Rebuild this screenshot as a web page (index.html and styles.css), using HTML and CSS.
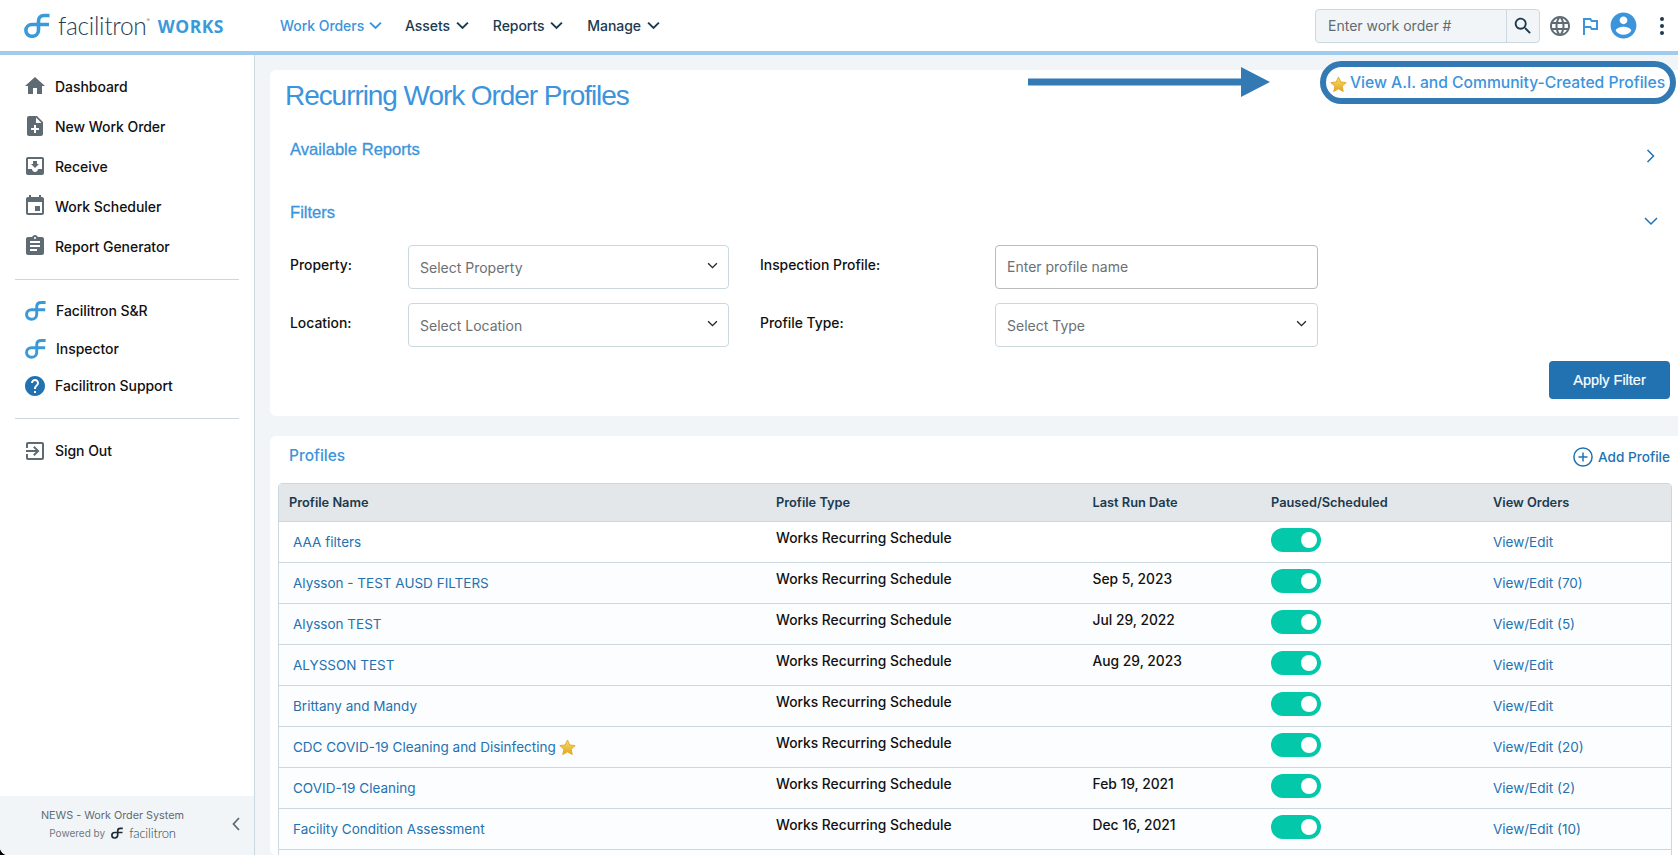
FILE: index.html
```html
<!DOCTYPE html>
<html lang="en">
<head>
<meta charset="utf-8">
<title>Recurring Work Order Profiles</title>
<link rel="stylesheet" href="styles.css">
</head>
<body>
<svg class="defs" width="0" height="0" aria-hidden="true">
  <defs>
    <symbol id="logo" viewBox="0 0 26 25"><path d="M25.5 2.5H20C16.2 2.500 14.500 5 14.500 8V17C14.500 21 11.500 23.300 8 23.300C4.500 23.300 1.900 20.800 1.900 17.500C1.900 14 4.500 11.500 8 11.500H25" fill="none" stroke="currentColor" stroke-width="3.600"/></symbol>
    <linearGradient id="gold" x1="0" y1="0" x2="0" y2="1"><stop offset="0" stop-color="#fbe06a"/><stop offset="1" stop-color="#e2a420"/></linearGradient>
    <symbol id="star" viewBox="0 0 24 24"><path d="M12 1.500l3.200 7 7.600.8-5.700 5.100 1.600 7.500L12 18.100l-6.700 3.800 1.600-7.500L1.200 9.300l7.600-.8z" fill="url(#gold)" stroke="#e3aa2a" stroke-width="1.400" stroke-linejoin="round"/></symbol>
    <symbol id="down" viewBox="0 0 12 8"><path d="M1 1.500l5 5 5-5" fill="none" stroke="currentColor" stroke-width="1.500"/></symbol>
    <symbol id="navdown" viewBox="0 0 12 8"><path d="M1 1.300l5 5 5-5" fill="none" stroke="currentColor" stroke-width="1.800"/></symbol>
  </defs>
</svg>
<div class="app">
  <header class="topbar">
    <a class="brand">
      <svg class="brand-mark"><use href="#logo"/></svg>
      <span class="brand-name">facilitron</span><span class="brand-reg">®</span>
      <span class="brand-works">WORKS</span>
    </a>
    <nav class="mainnav">
      <a class="navitem active">Work Orders <svg class="navchev"><use href="#navdown"/></svg></a>
      <a class="navitem">Assets <svg class="navchev"><use href="#navdown"/></svg></a>
      <a class="navitem">Reports <svg class="navchev"><use href="#navdown"/></svg></a>
      <a class="navitem">Manage <svg class="navchev"><use href="#navdown"/></svg></a>
    </nav>
    <div class="tools">
      <div class="wosearch">
        <input class="wosearch-input" placeholder="Enter work order #">
        <span class="wosearch-btn"><svg class="i22" viewBox="0 0 24 24"><path d="M15.500 14h-.79l-.28-.27C15.410 12.590 16 11.110 16 9.500 16 5.910 13.090 3 9.500 3S3 5.910 3 9.500 5.910 16 9.500 16c1.610 0 3.090-.59 4.230-1.570l.27.28v.79l5 4.990L20.490 19l-4.990-5zm-6 0C7.010 14 5 11.990 5 9.500S7.010 5 9.500 5 14 7.010 14 9.500 11.990 14 9.500 14z"/></svg></span>
      </div>
      <svg class="globe" viewBox="0 0 24 24"><path d="M11.990 2C6.470 2 2 6.480 2 12s4.470 10 9.990 10C17.520 22 22 17.520 22 12S17.520 2 11.990 2zm6.930 6h-2.950c-.32-1.250-.78-2.450-1.380-3.560 1.840.63 3.370 1.910 4.330 3.560zM12 4.040c.83 1.200 1.480 2.530 1.910 3.960h-3.820c.43-1.430 1.080-2.760 1.910-3.960zM4.260 14C4.100 13.360 4 12.690 4 12s.1-1.360.26-2h3.380c-.08.66-.14 1.320-.14 2 0 .68.06 1.340.14 2H4.260zm.82 2h2.950c.32 1.250.78 2.450 1.380 3.560-1.840-.63-3.370-1.900-4.330-3.560zm2.950-8H5.080c.96-1.660 2.490-2.930 4.330-3.560C8.810 5.550 8.350 6.750 8.030 8zM12 19.960c-.83-1.200-1.480-2.530-1.910-3.960h3.820c-.43 1.430-1.080 2.760-1.910 3.960zM14.340 14H9.660c-.09-.66-.16-1.320-.16-2 0-.68.07-1.350.16-2h4.680c.09.65.16 1.320.16 2 0 .68-.07 1.340-.16 2zm.25 5.560c.6-1.110 1.060-2.310 1.380-3.560h2.950c-.96 1.650-2.490 2.930-4.330 3.560zM16.360 14c.08-.66.14-1.320.14-2 0-.68-.06-1.340-.14-2h3.380c.16.64.26 1.310.26 2s-.1 1.360-.26 2h-3.380z"/></svg>
      <svg class="flag" viewBox="0 0 24 24"><path d="M14 6l-1-2H5v17h2v-7h5l1 2h7V6h-6zm4 8h-4l-1-2H7V6h5l1 2h5v6z"/></svg>
      <svg class="avatar" viewBox="0 0 24 24"><path d="M12 2C6.480 2 2 6.480 2 12s4.480 10 10 10 10-4.480 10-10S17.520 2 12 2zm0 3c1.660 0 3 1.340 3 3s-1.340 3-3 3-3-1.340-3-3 1.340-3 3-3zm0 14.200c-2.500 0-4.710-1.280-6-3.220.03-1.990 4-3.080 6-3.080 1.990 0 5.970 1.090 6 3.080-1.290 1.940-3.500 3.220-6 3.220z"/></svg>
      <span class="kebab"><i></i><i></i><i></i></span>
    </div>
  </header>

  <div class="body">
    <aside class="sidebar">
      <nav class="sidenav">
        <a class="sideitem"><svg class="sideicon" viewBox="0 0 24 24"><path d="M10 20v-6h4v6h5v-8h3L12 3 2 12h3v8z"/></svg>Dashboard</a>
        <a class="sideitem"><svg class="sideicon" viewBox="0 0 24 24"><path d="M14 2H6c-1.100 0-1.990.9-1.990 2L4 20c0 1.100.89 2 1.990 2H18c1.100 0 2-.9 2-2V8l-6-6zm2 14h-3v3h-2v-3H8v-2h3v-3h2v3h3v2zm-3-7V3.500L18.500 9H13z"/></svg>New Work Order</a>
        <a class="sideitem"><svg class="sideicon" viewBox="0 0 24 24"><path d="M19 3H4.990c-1.110 0-1.980.89-1.980 2L3 19c0 1.100.88 2 1.990 2H19c1.100 0 2-.9 2-2V5c0-1.110-.9-2-2-2zm0 12h-4c0 1.660-1.350 3-3 3s-3-1.340-3-3H4.990V5H19v10zm-3-5h-2V7h-4v3H8l4 4 4-4z"/></svg>Receive</a>
        <a class="sideitem"><svg class="sideicon" viewBox="0 0 24 24"><path d="M17 12h-5v5h5v-5zM16 1v2H8V1H6v2H5c-1.110 0-1.990.9-1.990 2L3 19c0 1.100.89 2 2 2h14c1.100 0 2-.9 2-2V5c0-1.100-.9-2-2-2h-1V1h-2zm3 18H5V8h14v11z"/></svg>Work Scheduler</a>
        <a class="sideitem"><svg class="sideicon" viewBox="0 0 24 24"><path d="M19 3h-4.180C14.400 1.840 13.300 1 12 1c-1.300 0-2.400.84-2.820 2H5c-1.100 0-2 .9-2 2v14c0 1.100.9 2 2 2h14c1.100 0 2-.9 2-2V5c0-1.100-.9-2-2-2zm-7 0c.55 0 1 .45 1 1s-.45 1-1 1-1-.45-1-1 .45-1 1-1zm2 14H7v-2h7v2zm3-4H7v-2h10v2zm0-4H7V7h10v2z"/></svg>Report Generator</a>
      </nav>
      <hr class="sidediv first">
      <nav class="sidenav apps">
        <a class="sideitem"><svg class="sidelogo"><use href="#logo"/></svg>Facilitron S&amp;R</a>
        <a class="sideitem"><svg class="sidelogo"><use href="#logo"/></svg>Inspector</a>
        <a class="sideitem support"><svg class="sideicon help" viewBox="0 0 24 24"><path d="M12 2C6.480 2 2 6.480 2 12s4.480 10 10 10 10-4.480 10-10S17.520 2 12 2zm1 17h-2v-2h2v2zm2.070-7.750l-.9.92C13.450 12.900 13 13.500 13 15h-2v-.5c0-1.100.45-2.100 1.170-2.830l1.240-1.260c.37-.36.59-.86.59-1.410 0-1.100-.9-2-2-2s-2 .9-2 2H8c0-2.210 1.790-4 4-4s4 1.790 4 4c0 .88-.36 1.680-.93 2.250z"/></svg>Facilitron Support</a>
      </nav>
      <hr class="sidediv">
      <nav class="sidenav">
        <a class="sideitem"><svg class="sideicon" viewBox="0 0 24 24"><path d="M10.090 15.590L11.500 17l5-5-5-5-1.410 1.410L12.670 11H3v2h9.670l-2.580 2.590zM19 3H5c-1.110 0-2 .9-2 2v4h2V5h14v14H5v-4H3v4c0 1.100.89 2 2 2h14c1.100 0 2-.9 2-2V5c0-1.100-.9-2-2-2z"/></svg>Sign Out</a>
      </nav>
      <footer class="sidefoot">
        <div class="sidefoot-info">
          <div class="sidefoot-name">NEWS - Work Order System</div>
          <div class="sidefoot-power">Powered by <svg class="foot-mark"><use href="#logo"/></svg><span class="foot-brand">facilitron</span></div>
        </div>
        <svg class="collapse" viewBox="0 0 8 14"><path d="M7 1L1.500 7 7 13" fill="none" stroke="currentColor" stroke-width="1.800"/></svg>
      </footer>
    </aside>

    <main class="content">
      <section class="card card-filters">
        <h1 class="pagetitle">Recurring Work Order Profiles</h1>
        <div class="callout">
          <svg class="callout-arrow" viewBox="0 0 242 30"><path d="M0 11.500H213V0L242 15 213 30V18.500H0z"/></svg>
          <a class="callout-link"><svg class="star"><use href="#star"/></svg>View A.I. and Community-Created Profiles</a>
        </div>
        <div class="sechead first">
          <h2 class="sectitle">Available Reports</h2>
          <svg class="secchev right" viewBox="0 0 20 20"><path d="M6.500 4l6 6-6 6" fill="none" stroke="currentColor" stroke-width="1.500"/></svg>
        </div>
        <div class="sechead">
          <h2 class="sectitle">Filters</h2>
          <svg class="secchev lower" viewBox="0 0 20 20"><path d="M4 7l6 6 6-6" fill="none" stroke="currentColor" stroke-width="1.500"/></svg>
        </div>
        <form class="filters">
          <label class="flabel">Property:</label>
          <div class="fselect"><span>Select Property</span><svg class="fchev"><use href="#down"/></svg></div>
          <label class="flabel">Inspection Profile:</label>
          <input class="finput" placeholder="Enter profile name">
          <label class="flabel">Location:</label>
          <div class="fselect"><span>Select Location</span><svg class="fchev"><use href="#down"/></svg></div>
          <label class="flabel">Profile Type:</label>
          <div class="fselect"><span>Select Type</span><svg class="fchev"><use href="#down"/></svg></div>
        </form>
        <div class="actions"><button class="btn" type="button">Apply Filter</button></div>
      </section>

      <section class="card card-table">
        <div class="tablehead">
          <h2 class="tabletitle">Profiles</h2>
          <a class="addlink"><svg class="addicon" viewBox="0 0 20 20"><circle cx="10" cy="10" r="9.100" fill="none" stroke="currentColor" stroke-width="1.500"/><path d="M10 5.500v9M5.500 10h9" stroke="currentColor" stroke-width="1.500"/></svg>Add Profile</a>
        </div>
        <table class="grid">
          <colgroup><col class="c1"><col class="c2"><col class="c3"><col class="c4"><col class="c5"></colgroup>
          <thead><tr><th>Profile Name</th><th>Profile Type</th><th>Last Run Date</th><th>Paused/Scheduled</th><th>View Orders</th></tr></thead>
          <tbody>
            <tr><td class="name"><a>AAA filters</a></td><td class="up">Works Recurring Schedule</td><td class="up"></td><td class="tg"><span class="toggle"><i></i></span></td><td class="view"><a>View/Edit</a></td></tr>
            <tr><td class="name"><a>Alysson - TEST AUSD FILTERS</a></td><td class="up">Works Recurring Schedule</td><td class="up">Sep 5, 2023</td><td class="tg"><span class="toggle"><i></i></span></td><td class="view"><a>View/Edit (70)</a></td></tr>
            <tr><td class="name"><a>Alysson TEST</a></td><td class="up">Works Recurring Schedule</td><td class="up">Jul 29, 2022</td><td class="tg"><span class="toggle"><i></i></span></td><td class="view"><a>View/Edit (5)</a></td></tr>
            <tr><td class="name"><a>ALYSSON TEST</a></td><td class="up">Works Recurring Schedule</td><td class="up">Aug 29, 2023</td><td class="tg"><span class="toggle"><i></i></span></td><td class="view"><a>View/Edit</a></td></tr>
            <tr><td class="name"><a>Brittany and Mandy</a></td><td class="up">Works Recurring Schedule</td><td class="up"></td><td class="tg"><span class="toggle"><i></i></span></td><td class="view"><a>View/Edit</a></td></tr>
            <tr><td class="name"><a>CDC COVID-19 Cleaning and Disinfecting</a> <svg class="star rowstar"><use href="#star"/></svg></td><td class="up">Works Recurring Schedule</td><td class="up"></td><td class="tg"><span class="toggle"><i></i></span></td><td class="view"><a>View/Edit (20)</a></td></tr>
            <tr><td class="name"><a>COVID-19 Cleaning</a></td><td class="up">Works Recurring Schedule</td><td class="up">Feb 19, 2021</td><td class="tg"><span class="toggle"><i></i></span></td><td class="view"><a>View/Edit (2)</a></td></tr>
            <tr><td class="name"><a>Facility Condition Assessment</a></td><td class="up">Works Recurring Schedule</td><td class="up">Dec 16, 2021</td><td class="tg"><span class="toggle"><i></i></span></td><td class="view"><a>View/Edit (10)</a></td></tr>
            <tr><td></td><td></td><td></td><td></td><td></td></tr>
          </tbody>
        </table>
      </section>
    </main>
  </div>
</div>
</body>
</html>
```
FILE: styles.css
```css
* { box-sizing: border-box; }
html, body { margin: 0; height: 100%; overflow: hidden; background: #000; }
body { font-family: Inter, "Liberation Sans", sans-serif; font-size: 14px; color: #111; }
.defs { position: absolute; }
.app { height: 855px; display: flex; flex-direction: column; background: #f2f5f7; border-bottom-left-radius: 8px; overflow: hidden; }

/* top bar */
.topbar { height: 55px; flex: none; display: flex; align-items: center; background: #fff; border-bottom: 4px solid #9ecbee; padding-left: 24px; }
.brand { display: flex; align-items: center; width: 256px; color: #1f3d52; }
.brand-mark { width: 26px; height: 25px; color: #3a9ad9; margin: -1px 8px 0 0; }
.brand-name { font-family: Lato, sans-serif; font-weight: 300; font-size: 24.500px; letter-spacing: -.3px; color: #1f3d52; }
.brand-reg { font-size: 5px; align-self: flex-start; margin: 6px 0 0 0; color: #777; }
.brand-works { font-family: "Open Sans", sans-serif; font-weight: 700; font-size: 17.500px; letter-spacing: .5px; color: #3a9ad9; margin-left: 8px; }
.mainnav { display: flex; gap: 24.300px; }
.navitem { display: flex; align-items: center; gap: 5.500px; font-weight: 500; font-size: 14px; letter-spacing: -.05px; color: #1c3a4f; }
.navitem.active { color: #3b94dc; margin-right: -1.500px; gap: 5px; }
.navchev { width: 13px; height: 9px; }
.tools { margin-left: auto; display: flex; align-items: center; }
.wosearch { display: flex; width: 225px; height: 34px; background: #f2f5f7; border: 1px solid #ccd8e0; border-radius: 4px; margin-right: 8px; }
.wosearch-input { flex: 1; min-width: 0; border: 0; background: none; padding: 0 12px; font: 400 14px Inter, sans-serif; color: #333; outline: 0; }
.wosearch-input::placeholder { color: #5f6b73; opacity: 1; }
.wosearch-btn { width: 33px; display: flex; align-items: center; justify-content: center; border-left: 1px solid #ccd8e0; }
.i22 { width: 22px; height: 22px; fill: #1c3a4f; }
.globe { width: 24px; height: 24px; fill: #5f6b73; }
.flag { width: 24px; height: 24px; fill: #3b94dc; margin-left: 6px; }
.avatar { width: 31px; height: 31px; fill: #3b94dc; margin-left: 6px; }
.kebab { display: flex; flex-direction: column; align-items: center; gap: 3px; width: 10px; margin: 0 11px 0 18px; }
.kebab i { width: 4px; height: 4px; border-radius: 50%; background: #1c3a4f; }

/* sidebar */
.body { flex: 1; min-height: 0; display: flex; }
.sidebar { width: 255px; flex: none; display: flex; flex-direction: column; background: #fff; border-right: 1px solid #ccd8e0; padding-top: 11px; }
.sidenav { display: flex; flex-direction: column; }
.sideitem { height: 40px; display: flex; align-items: center; padding-left: 23px; gap: 8px; font-weight: 500; font-size: 14px; letter-spacing: -.05px; color: #111; }
.apps { padding-bottom: 1px; }
.apps .sideitem { height: 37.500px; }
.sideicon { width: 24px; height: 24px; fill: #5f6b73; flex: none; }
.sideicon.help { fill: #2272b1; }
.sidelogo { width: 21px; height: 21px; margin-left: 2px; margin-right: 2px; color: #3a9ad9; flex: none; }
.sidediv { margin: 12px 15px; border: 0; border-top: 1px solid #ccd8e0; }
.sidediv.first { margin-top: 13px; }
.sidefoot { margin-top: auto; height: 59px; display: flex; align-items: center; padding-bottom: 3px; background: #f2f5f7; }
.sidefoot-info { width: 225px; text-align: center; color: #5f6b73; }
.sidefoot-name { font-size: 10.800px; line-height: 17px; padding-top: 1px; }
.sidefoot-power { display: flex; align-items: center; justify-content: center; font-size: 10px; color: #70797f; line-height: 18px; }
.foot-mark { width: 12px; height: 12px; color: #1c2a33; margin: 0 6px; }
.foot-brand { font-family: Lato, sans-serif; font-weight: 300; font-size: 13px; letter-spacing: -.2px; color: #1f3d52; }
.collapse { width: 8px; height: 14px; color: #5f6b73; margin-left: 7px; }

/* main */
.content { flex: 1; min-width: 0; padding: 15px 0 0 15px; display: flex; flex-direction: column; gap: 20px; }
.card { background: #fff; border-radius: 6px 0 0 6px; }
.card-filters { position: relative; flex: none; height: 346px; padding-left: 16px; }
.pagetitle { margin: 0 0 0 -1px; height: 50px; line-height: 51px; font-family: "Liberation Sans", Arial, sans-serif; font-weight: 400; font-size: 28px; letter-spacing: -1.060px; color: #3b94dc; }
.callout { position: absolute; top: -9px; right: 2px; display: flex; align-items: center; }
.callout-arrow { position: absolute; right: 406px; top: 6px; width: 242px; height: 30px; fill: #337ab5; }
.callout-link { display: flex; align-items: center; width: 356px; height: 43px; padding-left: 4px; border: 6px solid #337ab5; border-radius: 22px; background: #fff; font-weight: 500; font-size: 15.650px; color: #3b94dc; white-space: nowrap; }
.star { width: 17px; height: 17px; flex: none; }
.callout-link .star { margin: 4px 3px 0 0; }
.sechead { display: flex; justify-content: space-between; height: 20px; padding: 0 17px 0 4px; margin-top: 43px; }
.sechead.first { margin-top: 19px; }
.sectitle { margin: 0; font-family: "Liberation Sans", Arial, sans-serif; font-weight: 400; font-size: 16.600px; line-height: 22px; -webkit-text-stroke: .3px #3b94dc; color: #3b94dc; }
.secchev { width: 20px; height: 20px; margin-top: 7px; color: #2272b1; flex: none; }
.secchev.lower { margin-top: 9px; }
.filters { margin: 23px 0 0 4px; display: grid; grid-template-columns: 118px 321px 266px 322.500px; grid-auto-rows: 44px; row-gap: 14px; }
.flabel { padding-top: 10px; line-height: 20px; font-weight: 500; font-size: 13.900px; color: #111; }
.filters .fselect + .flabel { padding-left: 31px; }
.fselect { display: flex; align-items: center; justify-content: space-between; padding: 1px 10px 0 11px; background: #fff; border: 1px solid #ccd8e0; border-radius: 4px; font-size: 14px; color: #6b7075; }
.fchev { width: 11px; height: 7px; margin-top: -5px; color: #222; }
.finput { border: 1px solid #bbb; border-radius: 4px; padding: 0 11px 1px; font: 400 14px Inter, sans-serif; outline: 0; }
.finput::placeholder { color: #6b7075; opacity: 1; }
.actions { display: flex; justify-content: flex-end; margin: 14px 8px 0 0; }
.btn { width: 121px; height: 38px; border: 0; border-radius: 4px; background: #2272b1; color: #fff; font-family: "Liberation Sans", Arial, sans-serif; font-size: 14.500px; -webkit-text-stroke: .2px #fff; }

/* table card */
.card-table { flex: 1; min-height: 0; padding: 0 6px 0 8px; overflow: hidden; }
.tablehead { height: 47px; display: flex; align-items: center; justify-content: space-between; padding: 0 2px 0 11px; }
.tabletitle { margin: -9px 0 0; font-weight: 500; font-size: 15.500px; color: #3b94dc; }
.addlink { display: flex; align-items: center; gap: 5px; margin-top: -5px; font-weight: 500; font-size: 13.600px; color: #2272b1; }
.addicon { width: 20px; height: 20px; }
.grid { width: 1394px; table-layout: fixed; border-collapse: separate; border-spacing: 0; border: 1px solid #ccd8e0; border-radius: 4px 4px 0 0; }
.c1 { width: 487px; } .c2 { width: 316.500px; } .c3 { width: 178.500px; } .c4 { width: 222px; } .c5 { width: 188px; }
.grid th { height: 38px; padding: 0 10px 1px; text-align: left; background: #e3e7ea; border-bottom: 1px solid #ccd8e0; font-weight: 600; font-size: 12.800px; color: #1c3a4f; }
.grid td { height: 41px; padding: 0 10px; border-bottom: 1px solid #ccd8e0; background: #fcfdfe; font-weight: 450; font-size: 13.800px; color: #111; white-space: nowrap; }
.grid tbody tr:first-child td { background: #fff; }
.grid td.name { padding-left: 14px; }
.grid td a { color: #2272b1; font-weight: 400; font-size: 13.500px; }
.grid td.up { padding-bottom: 9px; }
.grid td.tg { padding-bottom: 4px; }
.rowstar { width: 17px; height: 17px; vertical-align: -4px; margin-left: 0; }
.toggle { display: flex; justify-content: flex-end; align-items: center; width: 50px; height: 24px; padding-right: 4px; border-radius: 12px; background: #04c8aa; }
.toggle i { width: 16px; height: 16px; border-radius: 50%; background: #fff; }
```
